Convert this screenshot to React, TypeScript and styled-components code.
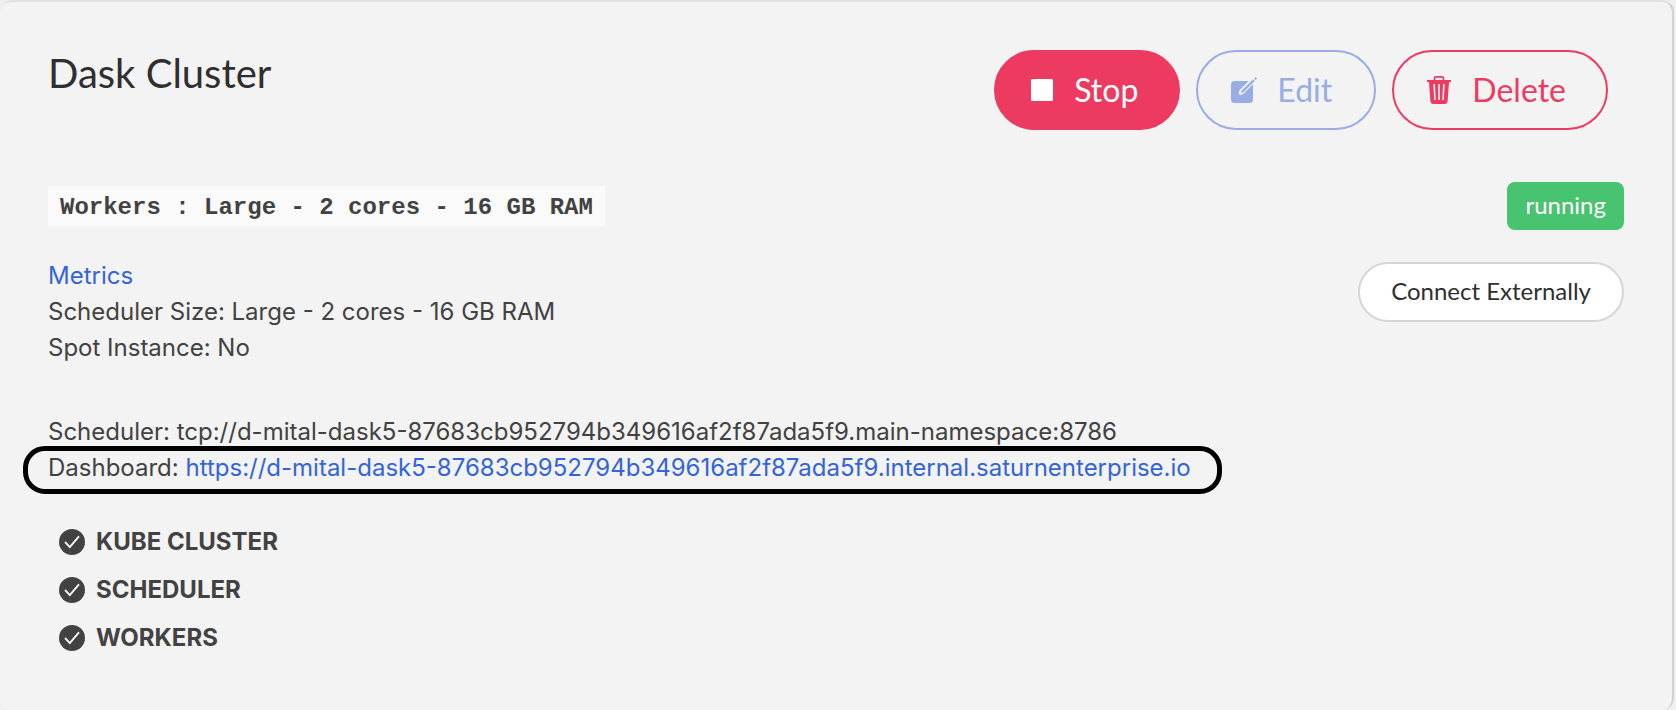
import React from "react";
import styled, { createGlobalStyle, css } from "styled-components";

const GlobalStyle = createGlobalStyle`
  *, *::before, *::after { box-sizing: border-box; }
  body {
    margin: 0;
    background: #f0f0f0;
    color: #424242;
    font-family: Inter, "Liberation Sans", sans-serif;
    font-size: 24px;
    line-height: 36px;
  }
`;

const Card = styled.main`
  margin-right: 2px;
  padding: 48px;
  background: #f3f3f3;
  border-top: 2px solid #e2e2e2;
  border-right: 2px solid #d1d1d1;
  border-radius: 12px;
`;

const Header = styled.header`
  display: flex;
  justify-content: space-between;
  align-items: flex-start;
  padding-right: 16px;
`;

const Title = styled.h1`
  margin: 0;
  color: #2f2f2f;
  font-family: Lato, sans-serif;
  font-size: 40px;
  font-weight: 400;
  line-height: 46px;
`;

const Actions = styled.div`
  display: flex;
  gap: 16px;
`;

const tones = {
  solid: css`
    color: #fff;
    background: #ec3a60;
    border-color: #ec3a60;
  `,
  blue: css`
    color: #97ade4;
    border-color: #97ade4;
  `,
  red: css`
    color: #ec3a60;
    border-color: #ec3a60;
  `,
};

const ActionButton = styled.button<{ $tone: keyof typeof tones }>`
  display: flex;
  align-items: center;
  gap: 21px;
  min-width: 180px;
  height: 80px;
  padding: 0 40px 0 33px;
  background: transparent;
  border: 2px solid;
  border-radius: 40px;
  font-family: Lato, sans-serif;
  font-size: 32px;
  line-height: 40px;
  ${({ $tone }) => tones[$tone]}

  svg {
    display: block;
    overflow: visible;
  }
`;

const Columns = styled.div`
  display: flex;
  justify-content: space-between;
  align-items: flex-start;
  margin-top: 52px;
`;

const Details = styled.div`
  padding-top: 4px;
`;

const Size = styled.code`
  display: block;
  width: max-content;
  margin-bottom: 32px;
  padding: 4px 12px 0;
  background: #fafafa;
  font-family: "Courier New", "Liberation Mono", monospace;
  font-size: 24px;
  font-weight: 700;
  line-height: 36px;
`;

const Line = styled.div``;

const Addresses = styled.div`
  margin-top: 48px;
`;

const Highlighted = styled.div`
  position: relative;
  width: max-content;

  &::after {
    content: "";
    position: absolute;
    inset: -4px -31px -8px -25px;
    border: 5px solid #000;
    border-radius: 22px;
    pointer-events: none;
  }
`;

const Link = styled.a`
  color: #3464d8;
  text-decoration: none;
`;

const Side = styled.div`
  display: flex;
  flex-direction: column;
  align-items: flex-end;
  gap: 32px;
`;

const Badge = styled.span`
  padding: 0 18px 2px;
  background: #48c36f;
  border-radius: 8px;
  color: #fff;
  font-family: Lato, sans-serif;
  font-size: 24px;
  line-height: 46px;
`;

const ConnectButton = styled.button`
  height: 60px;
  padding: 0 31px 4px;
  background: #fff;
  border: 2px solid #d6d6d6;
  border-radius: 30px;
  color: #2f2f2f;
  font-family: Lato, sans-serif;
  font-size: 24px;
`;

const Checks = styled.ul`
  margin: 32px 0 0;
  padding: 0 0 0 11px;
  list-style: none;
`;

const Check = styled.li`
  display: flex;
  align-items: center;
  gap: 11px;
  height: 48px;
  font-weight: 700;

  svg { display: block; }
`;

const StopIcon = () => (
  <svg width="24" height="26" viewBox="0 0 24 26" aria-hidden="true">
    <rect x="2" y="2" width="22" height="22" rx="1.5" fill="currentColor" />
  </svg>
);

const EditIcon = () => (
  <svg width="25" height="28" viewBox="0 0 25 28" aria-hidden="true">
    <path
      d="M3.5 5h14.300L9.200 13.600c-1.400 1.700-1.900 4-1 4.900 1 .9 3.200.3 4.800-1.200L22 8.300V23.500a3.500 3.500 0 0 1-3.500 3.500h-15A3.500 3.500 0 0 1 0 23.500v-15A3.500 3.500 0 0 1 3.500 5z"
      fill="currentColor"
    />
    <path d="M9.800 17.200l.9-2.700L22 3.400l1.700 1.700L12.400 16.200z" fill="currentColor" />
    <path d="M23.200 2.400l1.400-1.300 1.500 1.500-1.400 1.400z" fill="currentColor" />
  </svg>
);

const TrashIcon = () => (
  <svg width="24" height="28" viewBox="0 0 24 28" aria-hidden="true">
    <path d="M7.500 4V2.200C7.500 1.200 8.200.8 9 .8h6c.8 0 1.500.4 1.500 1.400V4" fill="none" stroke="currentColor" strokeWidth="1.700" />
    <path
      fillRule="evenodd"
      fill="currentColor"
      d="M0 4h24v2h-2l-1.400 19.500A2.700 2.700 0 0 1 18 28H6a2.700 2.700 0 0 1-2.600-2.500L2 6H0zM6.300 8l.9 16h1.500L8 8zM11.200 8v16h1.600V8zM16 8l-.7 16h1.500l.9-16z"
    />
  </svg>
);

const CheckIcon = () => (
  <svg width="26" height="26" viewBox="0 0 26 26" aria-hidden="true">
    <circle cx="13" cy="13" r="13" fill="currentColor" />
    <path d="M6.500 13.500l4.300 4.700L19.500 7.800" fill="none" stroke="#f3f3f3" strokeWidth="1.900" strokeLinecap="round" strokeLinejoin="round" />
  </svg>
);

const checks = ["KUBE CLUSTER", "SCHEDULER", "WORKERS"];

export default function App() {
  return (
    <>
      <GlobalStyle />
      <Card>
        <Header>
          <Title>Dask Cluster</Title>
          <Actions>
            <ActionButton type="button" $tone="solid"><StopIcon />Stop</ActionButton>
            <ActionButton type="button" $tone="blue"><EditIcon />Edit</ActionButton>
            <ActionButton type="button" $tone="red"><TrashIcon />Delete</ActionButton>
          </Actions>
        </Header>
        <Columns>
          <Details>
            <Size>Workers : Large - 2 cores - 16 GB RAM</Size>
            <Line><Link href="#metrics">Metrics</Link></Line>
            <Line>Scheduler Size: Large - 2 cores - 16 GB RAM</Line>
            <Line>Spot Instance: No</Line>
            <Addresses>
              <Line>Scheduler: tcp://d-mital-dask5-87683cb952794b349616af2f87ada5f9.main-namespace:8786</Line>
              <Highlighted>
                Dashboard:{" "}
                <Link href="https://d-mital-dask5-87683cb952794b349616af2f87ada5f9.internal.saturnenterprise.io">
                  https://d-mital-dask5-87683cb952794b349616af2f87ada5f9.internal.saturnenterprise.io
                </Link>
              </Highlighted>
            </Addresses>
          </Details>
          <Side>
            <Badge>running</Badge>
            <ConnectButton type="button">Connect Externally</ConnectButton>
          </Side>
        </Columns>
        <Checks>
          {checks.map((name) => (
            <Check key={name}><CheckIcon />{name}</Check>
          ))}
        </Checks>
      </Card>
    </>
  );
}
